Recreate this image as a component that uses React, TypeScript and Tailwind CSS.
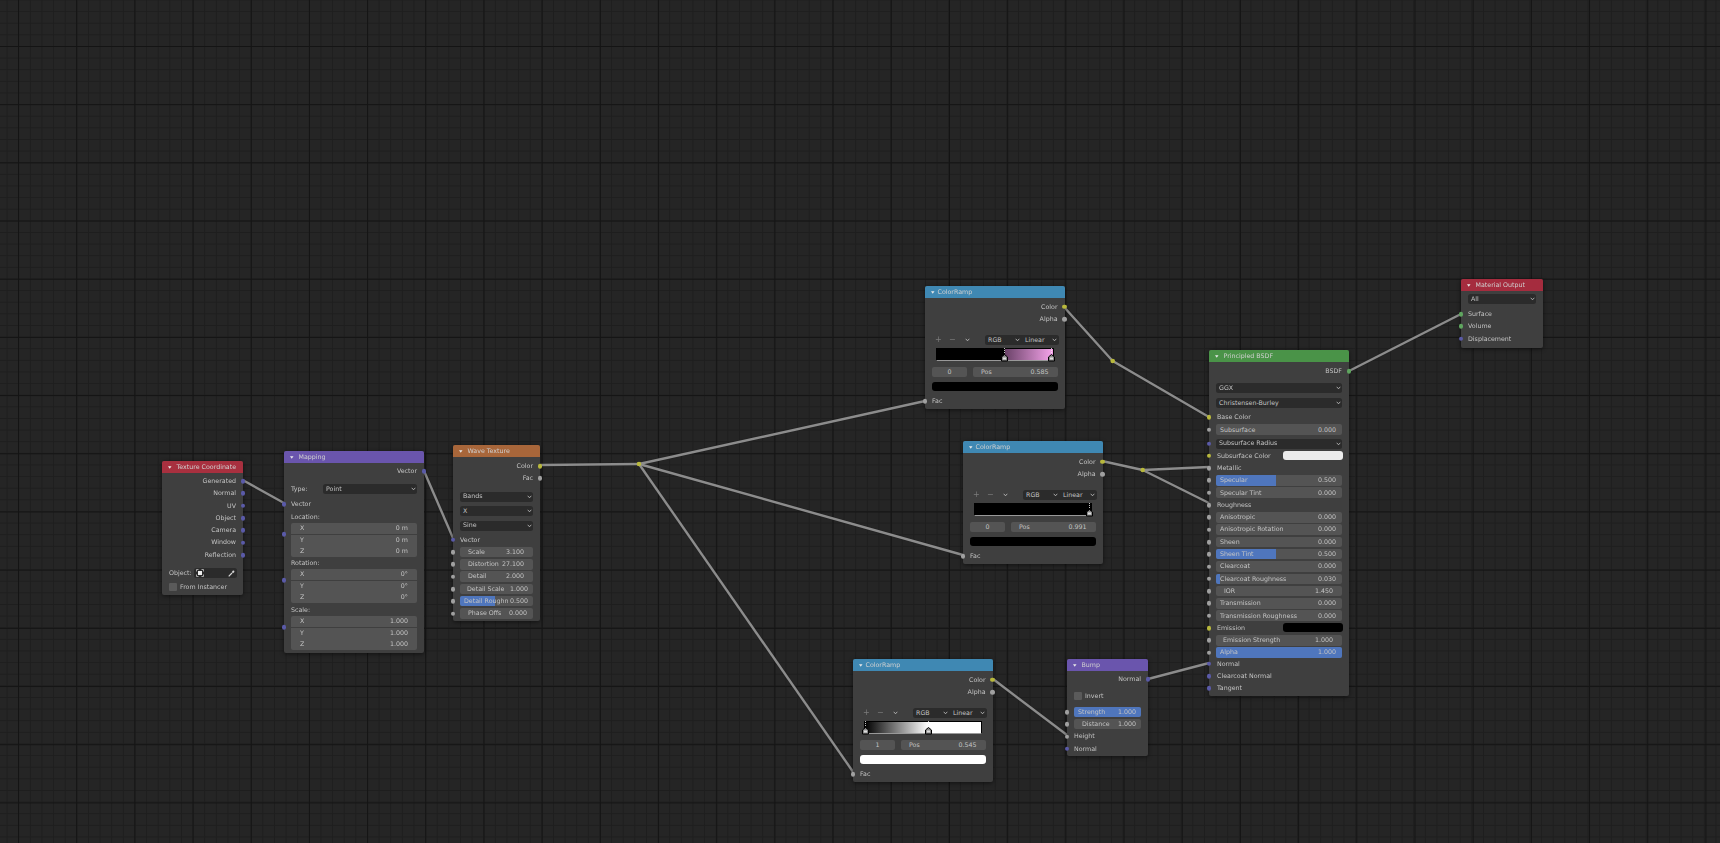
import type { ReactNode } from 'react'

const SOCKET = {
  yellow: 'bg-[#b8b83c]',
  gray: 'bg-[#a0a0a0]',
  purple: 'bg-[#5a5aa8]',
  green: 'bg-[#5fa55f]',
}
type SocketColor = keyof typeof SOCKET

function Socket({ color, side }: { color: SocketColor; side: 'left' | 'right' }) {
  return (
    <span
      className={`absolute top-1/2 -translate-y-1/2 w-[4.6px] h-[4.6px] rounded-full ${SOCKET[color]} ${
        side === 'left' ? 'left-[-2.3px]' : 'right-[-2.3px]'
      }`}
    />
  )
}

function Node({ pos, header, title, children }: { pos: string; header: string; title: string; children: ReactNode }) {
  return (
    <div className={`absolute ${pos} rounded-[2px] bg-[#3f3f3f] shadow-[0_1px_4px_rgba(0,0,0,0.55)]`}>
      <div className={`h-[12px] flex items-center pl-[6px] rounded-t-[2px] text-[#d0d0d0] ${header}`}>
        <svg width="3.5" height="3" viewBox="0 0 4 3" className="shrink-0">
          <path d="M0 0h4L2 3z" fill="#e8e8e8" />
        </svg>
        <span>{title}</span>
      </div>
      {children}
    </div>
  )
}

function Out({ label, color, pad = 'pr-[7px]' }: { label: string; color: SocketColor; pad?: string }) {
  return (
    <div className={`relative h-[12.3px] flex items-center justify-end ${pad}`}>
      {label}
      <Socket color={color} side="right" />
    </div>
  )
}

function In({ label, color, pad = 'pl-[7px]' }: { label: string; color: SocketColor; pad?: string }) {
  return (
    <div className={`relative h-[12.3px] flex items-center ${pad}`}>
      {label}
      <Socket color={color} side="left" />
    </div>
  )
}

function Chevron() {
  return (
    <svg width="5" height="4" viewBox="0 0 5 4" className="shrink-0">
      <path d="M0.7 0.8 2.5 2.8 4.3 0.8" fill="none" stroke="#c8c8c8" strokeWidth="0.8" />
    </svg>
  )
}

function Drop({ label, className = '' }: { label: string; className?: string }) {
  return (
    <div className={`h-[10px] rounded-[2.5px] bg-[#2b2b2b] flex items-center justify-between pl-[3px] pr-[1.5px] ${className}`}>
      <span>{label}</span>
      <Chevron />
    </div>
  )
}

function Num({ label, value, fill = 0, pad = 'pl-[4px] pr-[6px]' }: { label: string; value: string; fill?: number; pad?: string }) {
  return (
    <div className={`relative h-[10.5px] rounded-[2px] bg-[#545454] overflow-hidden flex items-center justify-between ${pad}`}>
      {fill > 0 && <span className="absolute left-0 top-0 bottom-0 bg-[#4f76bd]" style={{ width: `${fill * 100}%` }} />}
      <span className="relative whitespace-nowrap">{label}</span>
      <span className="relative">{value}</span>
    </div>
  )
}

function NumRow(props: { label: string; value: string; fill?: number; pad?: string; x: string; socket?: SocketColor }) {
  const { x, socket = 'gray', ...num } = props
  return (
    <div className="relative h-[12.3px] flex flex-col justify-center">
      <div className={x}>
        <Num {...num} />
      </div>
      <Socket color={socket} side="left" />
    </div>
  )
}

function TextureCoordinate() {
  const outs = ['Generated', 'Normal', 'UV', 'Object', 'Camera', 'Window', 'Reflection']
  return (
    <Node pos="left-[162px] top-[461px] w-[81px] h-[134px]" header="bg-[#a8303f] gap-[5px]" title="Texture Coordinate">
      <div className="pt-[2px]">
        {outs.map((o) => (
          <Out key={o} label={o} color="purple" />
        ))}
      </div>
      <div className="mt-[7px] h-[10px] pl-[7px] pr-[6px] flex items-center gap-[2px]">
        <span>Object:</span>
        <div className="flex-1 h-[10px] rounded-[2.5px] bg-[#2b2b2b] flex items-center justify-between px-[2px]">
          <svg width="8" height="8" viewBox="0 0 8 8">
            <path d="M0.5 2.5v-2h2M5.5 0.5h2v2M7.5 5.5v2h-2M2.5 7.5h-2v-2" fill="none" stroke="#d8d8d8" strokeWidth="0.7" />
            <rect x="2" y="2" width="4" height="4" fill="#eeeeee" />
          </svg>
          <svg width="7" height="7" viewBox="0 0 7 7">
            <path d="M0.7 6.3 4 3M4.2 1.6 5.4 2.8" stroke="#d8d8d8" strokeWidth="1.2" fill="none" />
            <circle cx="5.4" cy="1.6" r="1" fill="#d8d8d8" />
          </svg>
        </div>
      </div>
      <div className="mt-[4px] h-[10px] pl-[7px] flex items-center gap-[3px]">
        <span className="w-[8px] h-[8px] rounded-[1px] bg-[#5a5a5a]" />
        <span>From Instancer</span>
      </div>
    </Node>
  )
}

function XYZ({ values }: { values: string[] }) {
  return (
    <div className="relative">
      <div className="mx-[7px] rounded-[2px] overflow-hidden flex flex-col gap-[0.5px]">
        {['X', 'Y', 'Z'].map((axis, i) => (
          <div key={axis} className="h-[11px] bg-[#545454] flex items-center justify-between pl-[9px] pr-[9px]">
            <span>{axis}</span>
            <span>{values[i]}</span>
          </div>
        ))}
      </div>
      <div className="absolute left-0 top-0 h-[22px]">
        <Socket color="purple" side="left" />
      </div>
    </div>
  )
}

function Mapping() {
  return (
    <Node pos="left-[284px] top-[451px] w-[140px] h-[202px]" header="bg-[#6a55ad] gap-[5px]" title="Mapping">
      <div className="pt-[2px]">
        <Out label="Vector" color="purple" />
      </div>
      <div className="mt-[6.5px] pl-[7px] pr-[7px] flex items-center h-[10px]">
        <span className="w-[32px]">Type:</span>
        <Drop label="Point" className="flex-1" />
      </div>
      <div className="mt-[4px]">
        <In label="Vector" color="purple" />
      </div>
      <div className="mt-[1px] h-[12px] pl-[7px] flex items-center">Location:</div>
      <XYZ values={['0 m', '0 m', '0 m']} />
      <div className="h-[12px] pl-[7px] flex items-center">Rotation:</div>
      <XYZ values={['0°', '0°', '0°']} />
      <div className="mt-[1px] h-[12px] pl-[7px] flex items-center">Scale:</div>
      <XYZ values={['1.000', '1.000', '1.000']} />
    </Node>
  )
}

function WaveTexture() {
  const x = 'mx-[7px]'
  return (
    <Node pos="left-[453px] top-[445px] w-[87px] h-[176px]" header="bg-[#a8663a] gap-[5px]" title="Wave Texture">
      <div className="pt-[3px]">
        <Out label="Color" color="yellow" />
        <Out label="Fac" color="gray" />
      </div>
      <div className="mt-[7px] flex flex-col gap-[4.5px] mx-[7px]">
        <Drop label="Bands" />
        <Drop label="X" />
        <Drop label="Sine" />
      </div>
      <div className="mt-[3px]">
        <In label="Vector" color="purple" />
      </div>
      <NumRow x={x} label="Scale" value="3.100" pad="pl-[8px] pr-[9px]" />
      <NumRow x={x} label="Distortion" value="27.100" pad="pl-[8px] pr-[9px]" />
      <NumRow x={x} label="Detail" value="2.000" pad="pl-[8px] pr-[9px]" />
      <NumRow x={x} label="Detail Scale" value="1.000" pad="pl-[7px] pr-[5px]" />
      <NumRow x={x} label="Detail Roughn" value="0.500" fill={0.48} pad="pl-[4px] pr-[5px]" />
      <NumRow x={x} label="Phase Offs" value="0.000" pad="pl-[8px] pr-[6px]" />
    </Node>
  )
}

function RampStop({ at }: { at: string }) {
  return (
    <span className={`absolute top-[-1px] w-[7px] h-[14px] ml-[-3.5px] ${at}`}>
      <svg width="7" height="14" viewBox="0 0 7 14">
        <path d="M3.5 0v6" stroke="#f4f4f4" strokeWidth="0.8" strokeDasharray="1 1" />
        <path d="M3.5 6.5 6.5 9v4h-6V9z" fill="#8a8a8a" stroke="#000" strokeWidth="1" />
        <rect x="2" y="9.5" width="3" height="2" fill="#dddddd" />
      </svg>
    </span>
  )
}

function ColorRamp(props: { pos: string; ramp: string; stops: string[]; index: string; value: string; swatch: string }) {
  return (
    <Node pos={`${props.pos} w-[139.5px] h-[123px]`} header="bg-[#3f88b3] gap-[3px]" title="ColorRamp">
      <div className="pt-[2.7px]">
        <Out label="Color" color="yellow" />
        <Out label="Alpha" color="gray" />
      </div>
      <div className="mt-[10px] h-[10px] pl-[10px] pr-[6px] flex items-center text-[#7c7c7c]">
        <span className="w-[14px] text-[8px]">+</span>
        <span className="w-[16px] text-[8px]">−</span>
        <span className="w-[20px]">
          <Chevron />
        </span>
        <div className="flex-1 flex gap-[0.5px] text-[#c4c4c4]">
          <Drop label="RGB" className="flex-1 rounded-r-none" />
          <Drop label="Linear" className="flex-1 rounded-l-none" />
        </div>
      </div>
      <div className={`relative mt-[3px] mx-[11px] w-[118px] h-[13px] border border-black border-b-[#999] ${props.ramp}`}>
        {props.stops.map((s) => (
          <RampStop key={s} at={s} />
        ))}
      </div>
      <div className="mt-[6px] mx-[7px] flex gap-[6px]">
        <div className="w-[35px] h-[10px] rounded-[2px] bg-[#545454] flex items-center justify-center">{props.index}</div>
        <div className="flex-1 h-[10px] rounded-[2px] bg-[#545454] flex items-center justify-between pl-[8px] pr-[9px]">
          <span>Pos</span>
          <span>{props.value}</span>
        </div>
      </div>
      <div className={`mt-[5px] mx-[7px] h-[9px] rounded-[3px] ${props.swatch}`} />
      <div className="mt-[3.7px]">
        <In label="Fac" color="gray" />
      </div>
    </Node>
  )
}

function Bump() {
  return (
    <Node pos="left-[1067px] top-[659px] w-[81px] h-[97px]" header="bg-[#6a55ad] gap-[5px]" title="Bump">
      <div className="pt-[2px]">
        <Out label="Normal" color="purple" />
      </div>
      <div className="mt-[6px] h-[10px] pl-[7px] flex items-center gap-[3px]">
        <span className="w-[8px] h-[8px] rounded-[1px] bg-[#5a5a5a]" />
        <span>Invert</span>
      </div>
      <div className="mt-[4.5px]">
        <NumRow x="mx-[7px]" label="Strength" value="1.000" fill={1} pad="pl-[4px] pr-[5px]" />
        <NumRow x="mx-[7px]" label="Distance" value="1.000" pad="pl-[8px] pr-[5px]" />
      </div>
      <In label="Height" color="gray" />
      <In label="Normal" color="purple" />
    </Node>
  )
}

function Swatch({ label, color }: { label: string; color: string }) {
  return (
    <div className="relative h-[12.3px] pl-[8px] pr-[6px] flex items-center justify-between">
      <span>{label}</span>
      <span className={`w-[60px] h-[9px] rounded-[3px] ${color}`} />
      <Socket color="yellow" side="left" />
    </div>
  )
}

function PrincipledBSDF() {
  const x = 'mx-[7px]'
  const pad = 'pl-[8px]'
  const num: [string, string, number?, string?][] = [
    ['Anisotropic', '0.000'],
    ['Anisotropic Rotation', '0.000'],
    ['Sheen', '0.000'],
    ['Sheen Tint', '0.500', 0.48],
    ['Clearcoat', '0.000'],
    ['Clearcoat Roughness', '0.030', 0.03],
    ['IOR', '1.450', 0, 'pl-[8px] pr-[9px]'],
    ['Transmission', '0.000'],
    ['Transmission Roughness', '0.000'],
  ]
  return (
    <Node pos="left-[1209px] top-[350px] w-[140px] h-[346px]" header="bg-[#4a9348] gap-[5px]" title="Principled BSDF">
      <div className="pt-[3px]">
        <Out label="BSDF" color="green" />
      </div>
      <div className="mt-[6px] flex flex-col gap-[5px] mx-[7px]">
        <Drop label="GGX" />
        <Drop label="Christensen-Burley" />
      </div>
      <div className="mt-[3px]">
        <In label="Base Color" color="yellow" pad={pad} />
      </div>
      <NumRow x={x} label="Subsurface" value="0.000" />
      <div className="relative mt-[1.5px] h-[12.3px] flex items-center">
        <Drop label="Subsurface Radius" className="flex-1 mx-[7px]" />
        <Socket color="purple" side="left" />
      </div>
      <Swatch label="Subsurface Color" color="bg-[#ececec]" />
      <In label="Metallic" color="gray" pad={pad} />
      <NumRow x={x} label="Specular" value="0.500" fill={0.48} />
      <NumRow x={x} label="Specular Tint" value="0.000" />
      <In label="Roughness" color="gray" pad={pad} />
      {num.map(([label, value, fill, rowPad]) => (
        <NumRow key={label} x={x} label={label} value={value} fill={fill} pad={rowPad} />
      ))}
      <Swatch label="Emission" color="bg-black" />
      <NumRow x={x} label="Emission Strength" value="1.000" pad="pl-[7px] pr-[9px]" />
      <NumRow x={x} label="Alpha" value="1.000" fill={1} />
      <div className="-mt-[1px]">
        <In label="Normal" color="purple" pad={pad} />
        <In label="Clearcoat Normal" color="purple" pad={pad} />
        <In label="Tangent" color="purple" pad={pad} />
      </div>
    </Node>
  )
}

function MaterialOutput() {
  return (
    <Node pos="left-[1461px] top-[279px] w-[82px] h-[69px]" header="bg-[#a52c3e] gap-[5px]" title="Material Output">
      <div className="mt-[3px] mx-[7px]">
        <Drop label="All" />
      </div>
      <div className="mt-[4px]">
        <In label="Surface" color="green" />
        <In label="Volume" color="green" />
        <In label="Displacement" color="purple" />
      </div>
    </Node>
  )
}

// noodle endpoints measured from the node sockets
const LINKS = [
  '243.5,480.5 284,503',
  '424,471 453,538',
  '540,465 639,464',
  '639,464 925,401',
  '639,464 963,555',
  '639,464 853.5,772.5',
  '1064,307 1112.7,361 1209,417',
  '1102,461 1142.7,470 1209,467',
  '1142.7,470 1209,503',
  '993,679 1067,735',
  '1148,679 1209,663',
  '1349,371 1461,314',
]

function Links() {
  return (
    <svg className="absolute inset-0 w-full h-full" viewBox="0 0 1720 843">
      {LINKS.map((points) => (
        <polyline key={points} points={points} fill="none" stroke="#1e1e1e" strokeWidth="3.6" opacity="0.5" />
      ))}
      {LINKS.map((points) => (
        <polyline key={points} points={points} fill="none" stroke="#8c8c8c" strokeWidth="2.4" strokeLinejoin="round" />
      ))}
      <circle cx="639" cy="464" r="2.3" fill="#b8b83c" />
      <circle cx="1112.7" cy="361" r="2.3" fill="#b8b83c" />
      <circle cx="1142.7" cy="470" r="2.3" fill="#b8b83c" />
    </svg>
  )
}

export default function App() {
  return (
    <div className="relative w-full h-[843px] overflow-hidden bg-[#252525] bg-[linear-gradient(to_right,#141414_1px,transparent_1px),linear-gradient(to_bottom,#141414_1px,transparent_1px),linear-gradient(to_right,#1e1e1e_1px,transparent_1px),linear-gradient(to_bottom,#1e1e1e_1px,transparent_1px)] bg-size-[58.2px_58.2px,58.2px_58.2px,11.64px_11.64px,11.64px_11.64px] bg-position-[18px_46px,18px_46px,6.6px_11.1px,6.6px_11.1px]">
      <div className="absolute inset-0 blur-[0.5px] text-[6.3px] leading-none text-[#c4c4c4] font-['DejaVu_Sans',sans-serif]">
        <Links />
        <TextureCoordinate />
        <Mapping />
        <WaveTexture />
        <ColorRamp
          pos="left-[925px] top-[286px]"
          ramp="bg-[linear-gradient(to_right,#000_58.5%,#6a4268_58.5%,#f3a2e8_99%)]"
          stops={['left-[58.5%]', 'left-[99%]']}
          index="0"
          value="0.585"
          swatch="bg-black"
        />
        <ColorRamp
          pos="left-[963px] top-[441px]"
          ramp="bg-black"
          stops={['left-[99.1%]']}
          index="0"
          value="0.991"
          swatch="bg-black"
        />
        <ColorRamp
          pos="left-[853px] top-[659px]"
          ramp="bg-[linear-gradient(to_right,#000_0%,#fff_54.5%)]"
          stops={['left-[0%]', 'left-[54.5%]']}
          index="1"
          value="0.545"
          swatch="bg-white"
        />
        <Bump />
        <PrincipledBSDF />
        <MaterialOutput />
      </div>
    </div>
  )
}
